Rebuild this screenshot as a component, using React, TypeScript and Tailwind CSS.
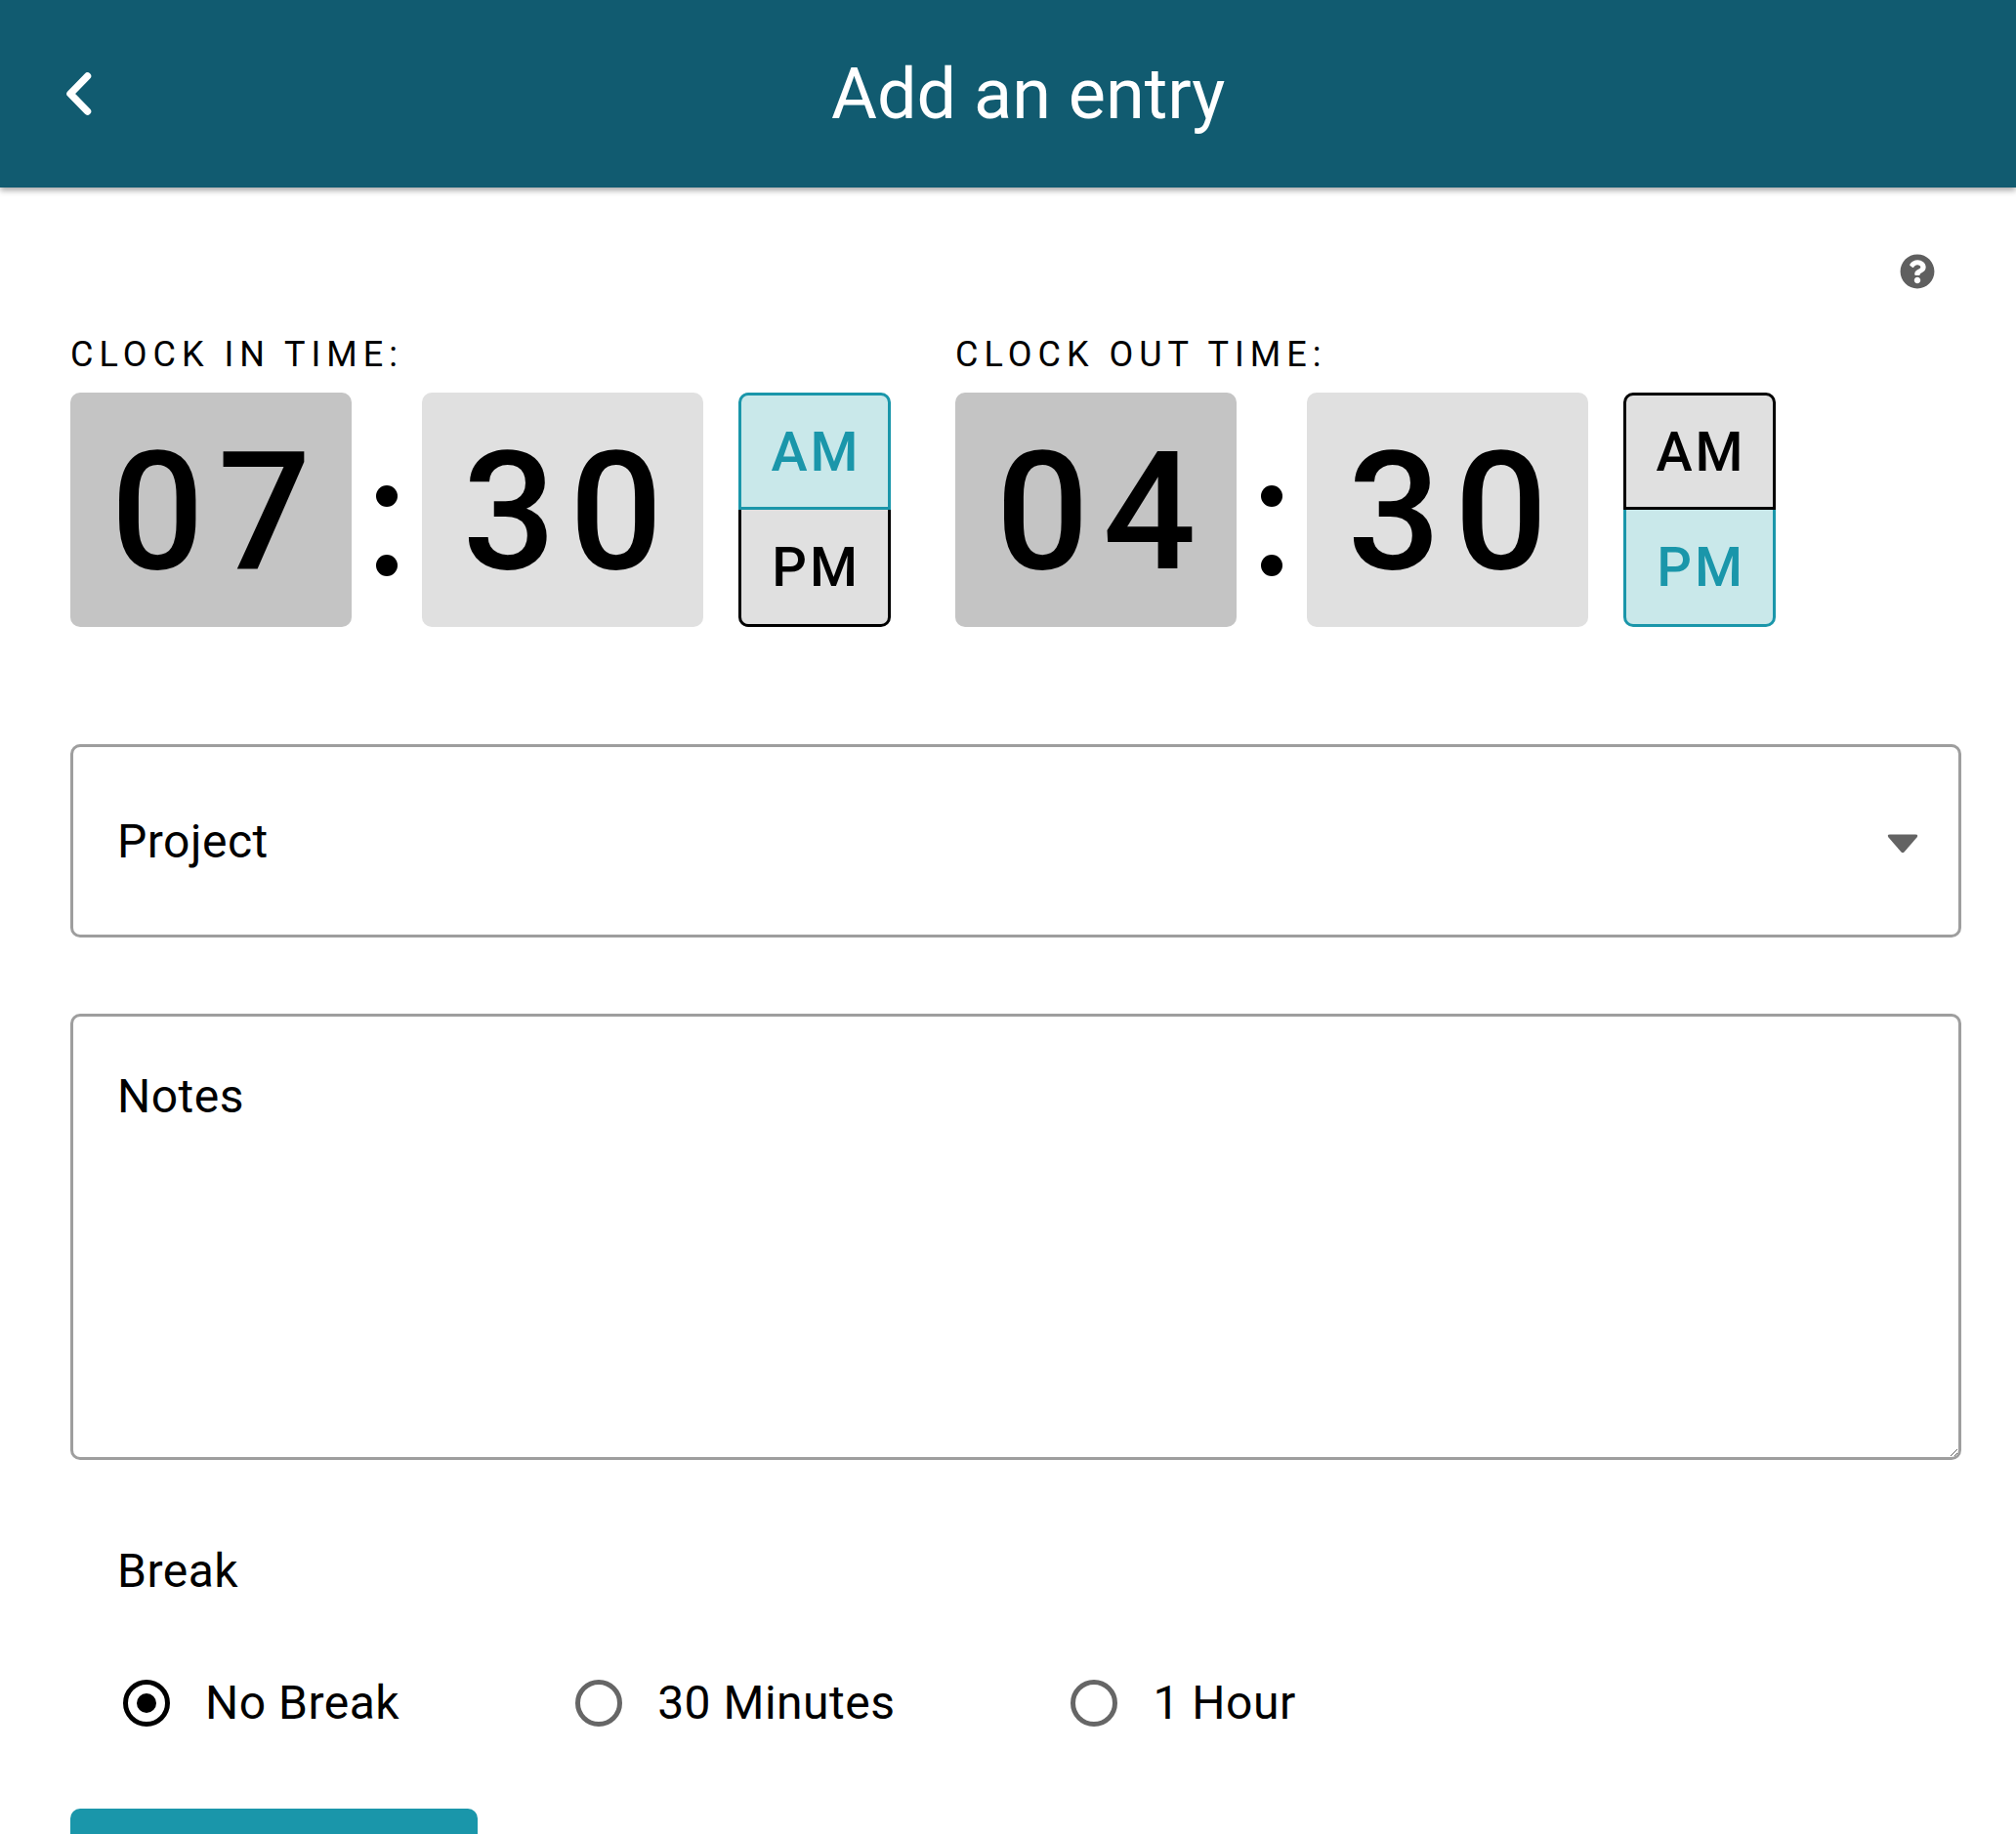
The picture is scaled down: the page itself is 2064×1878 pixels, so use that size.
import React from "react";
import { FaQuestionCircle } from "react-icons/fa";

const font = { fontFamily: "Roboto, sans-serif" };

function Digits({ value, dark }: { value: string; dark?: boolean }) {
  return (
    <div className={`flex h-[240px] w-[288px] items-center justify-center rounded-[10px] pt-[6px] pl-[14px] text-[168px] leading-none tracking-[14px] font-medium text-black ${dark ? "bg-[#c4c4c4]" : "bg-[#e0e0e0]"}`}>
      {value}
    </div>
  );
}

function Clock({ label, hour, minute, pm, className }: { label: string; hour: string; minute: string; pm?: boolean; className?: string }) {
  const on = "border-[#1a96aa] bg-[#c9e8ea] text-[#1a96aa]";
  const off = "border-black bg-[#e0e0e0] text-black";
  return (
    <div className={className}>
      <div className="h-[42px] text-[36px] leading-[42px] tracking-[6px] text-black">{label}</div>
      <div className="mt-[18px] flex items-center">
        <Digits value={hour} dark />
        <div className="mt-[42px] flex w-[72px] flex-col items-center gap-[49px]">
          <span className="h-[22px] w-[22px] rounded-full bg-black" />
          <span className="h-[22px] w-[22px] rounded-full bg-black" />
        </div>
        <Digits value={minute} />
        <div className="ml-[36px] flex h-[240px] w-[156px] flex-col text-[56px] font-medium tracking-[3px]">
          <div className={`flex h-[120px] items-center justify-center rounded-t-[10px] border-[3px] pt-[2px] pl-[3px] ${pm ? off : on}`}>AM</div>
          <div className={`flex h-[120px] items-center justify-center rounded-b-[10px] border-[3px] border-t-0 pl-[3px] ${pm ? on : off}`}>PM</div>
        </div>
      </div>
    </div>
  );
}

function Radio({ label, checked, className }: { label: string; checked?: boolean; className?: string }) {
  return (
    <div className={`flex items-center ${className ?? ""}`}>
      <span className={`flex h-[48px] w-[48px] items-center justify-center rounded-full border-[5px] ${checked ? "border-black" : "border-[#666666]"}`}>
        {checked && <span className="h-[20px] w-[20px] rounded-full bg-black" />}
      </span>
      <span className="ml-[36px] text-[48px] leading-none tracking-[0.5px] text-black">{label}</span>
    </div>
  );
}

export default function App() {
  return (
    <div style={font} className="relative h-[1878px] overflow-hidden bg-white">
      <header className="flex h-[192px] items-center bg-[#115b70] pl-[64px] shadow-[0_3px_6px_rgba(0,0,0,0.35)]">
        <svg width="32" height="48" viewBox="0 0 32 48" fill="none" stroke="white" strokeWidth="7.500" strokeLinecap="round" strokeLinejoin="round">
          <path d="M25.500 6 L8 24 L25.500 42" />
        </svg>
        <h1 className="ml-[755px] pt-[2px] text-[72px] leading-none font-normal text-white">Add an entry</h1>
      </header>
      <main className="px-[56px] pl-[72px]">
        <div className="flex h-[104px] items-end justify-end pr-[27px]">
          <FaQuestionCircle size={36} color="#5f5f5f" />
        </div>
        <div className="mt-[46px] flex">
          <Clock label="CLOCK IN TIME:" hour="07" minute="30" />
          <Clock label="CLOCK OUT TIME:" hour="04" minute="30" pm className="ml-[66px]" />
        </div>
        <div className="mt-[120px] flex h-[198px] items-center justify-between rounded-[10px] border-[3px] border-[#9e9e9e] pr-[41px] pl-[45px] text-[48px] tracking-[0.5px] text-black">
          <span className="pt-[2px]">Project</span>
          <svg className="mt-[5px]" width="32" height="20" viewBox="0 0 32 20" fill="#636363">
            <path d="M3 0.500 H29 Q32.500 0.500 30.500 3.500 L17.500 18.500 Q16 20 14.500 18.500 L1.500 3.500 Q-0.500 0.500 3 0.500 Z" />
          </svg>
        </div>
        <textarea
          readOnly
          placeholder="Notes"
          className="mt-[78px] block h-[457px] w-full rounded-[10px] border-[3px] border-[#9e9e9e] px-[45px] pt-[50px] text-[48px] leading-[64px] tracking-[0.5px] text-black outline-none placeholder:text-black"
        />
        <div className="mt-[86px] pl-[48px] text-[48px] leading-[56px] tracking-[0.5px] text-black">Break</div>
        <div className="mt-[83px] flex pl-[54px]">
          <Radio label="No Break" checked />
          <Radio label="30 Minutes" className="ml-[180px]" />
          <Radio label="1 Hour" className="ml-[180px]" />
        </div>
      </main>
      <div className="absolute top-[1852px] left-[72px] h-[60px] w-[417px] rounded-[10px] bg-[#1a96aa]" />
    </div>
  );
}
